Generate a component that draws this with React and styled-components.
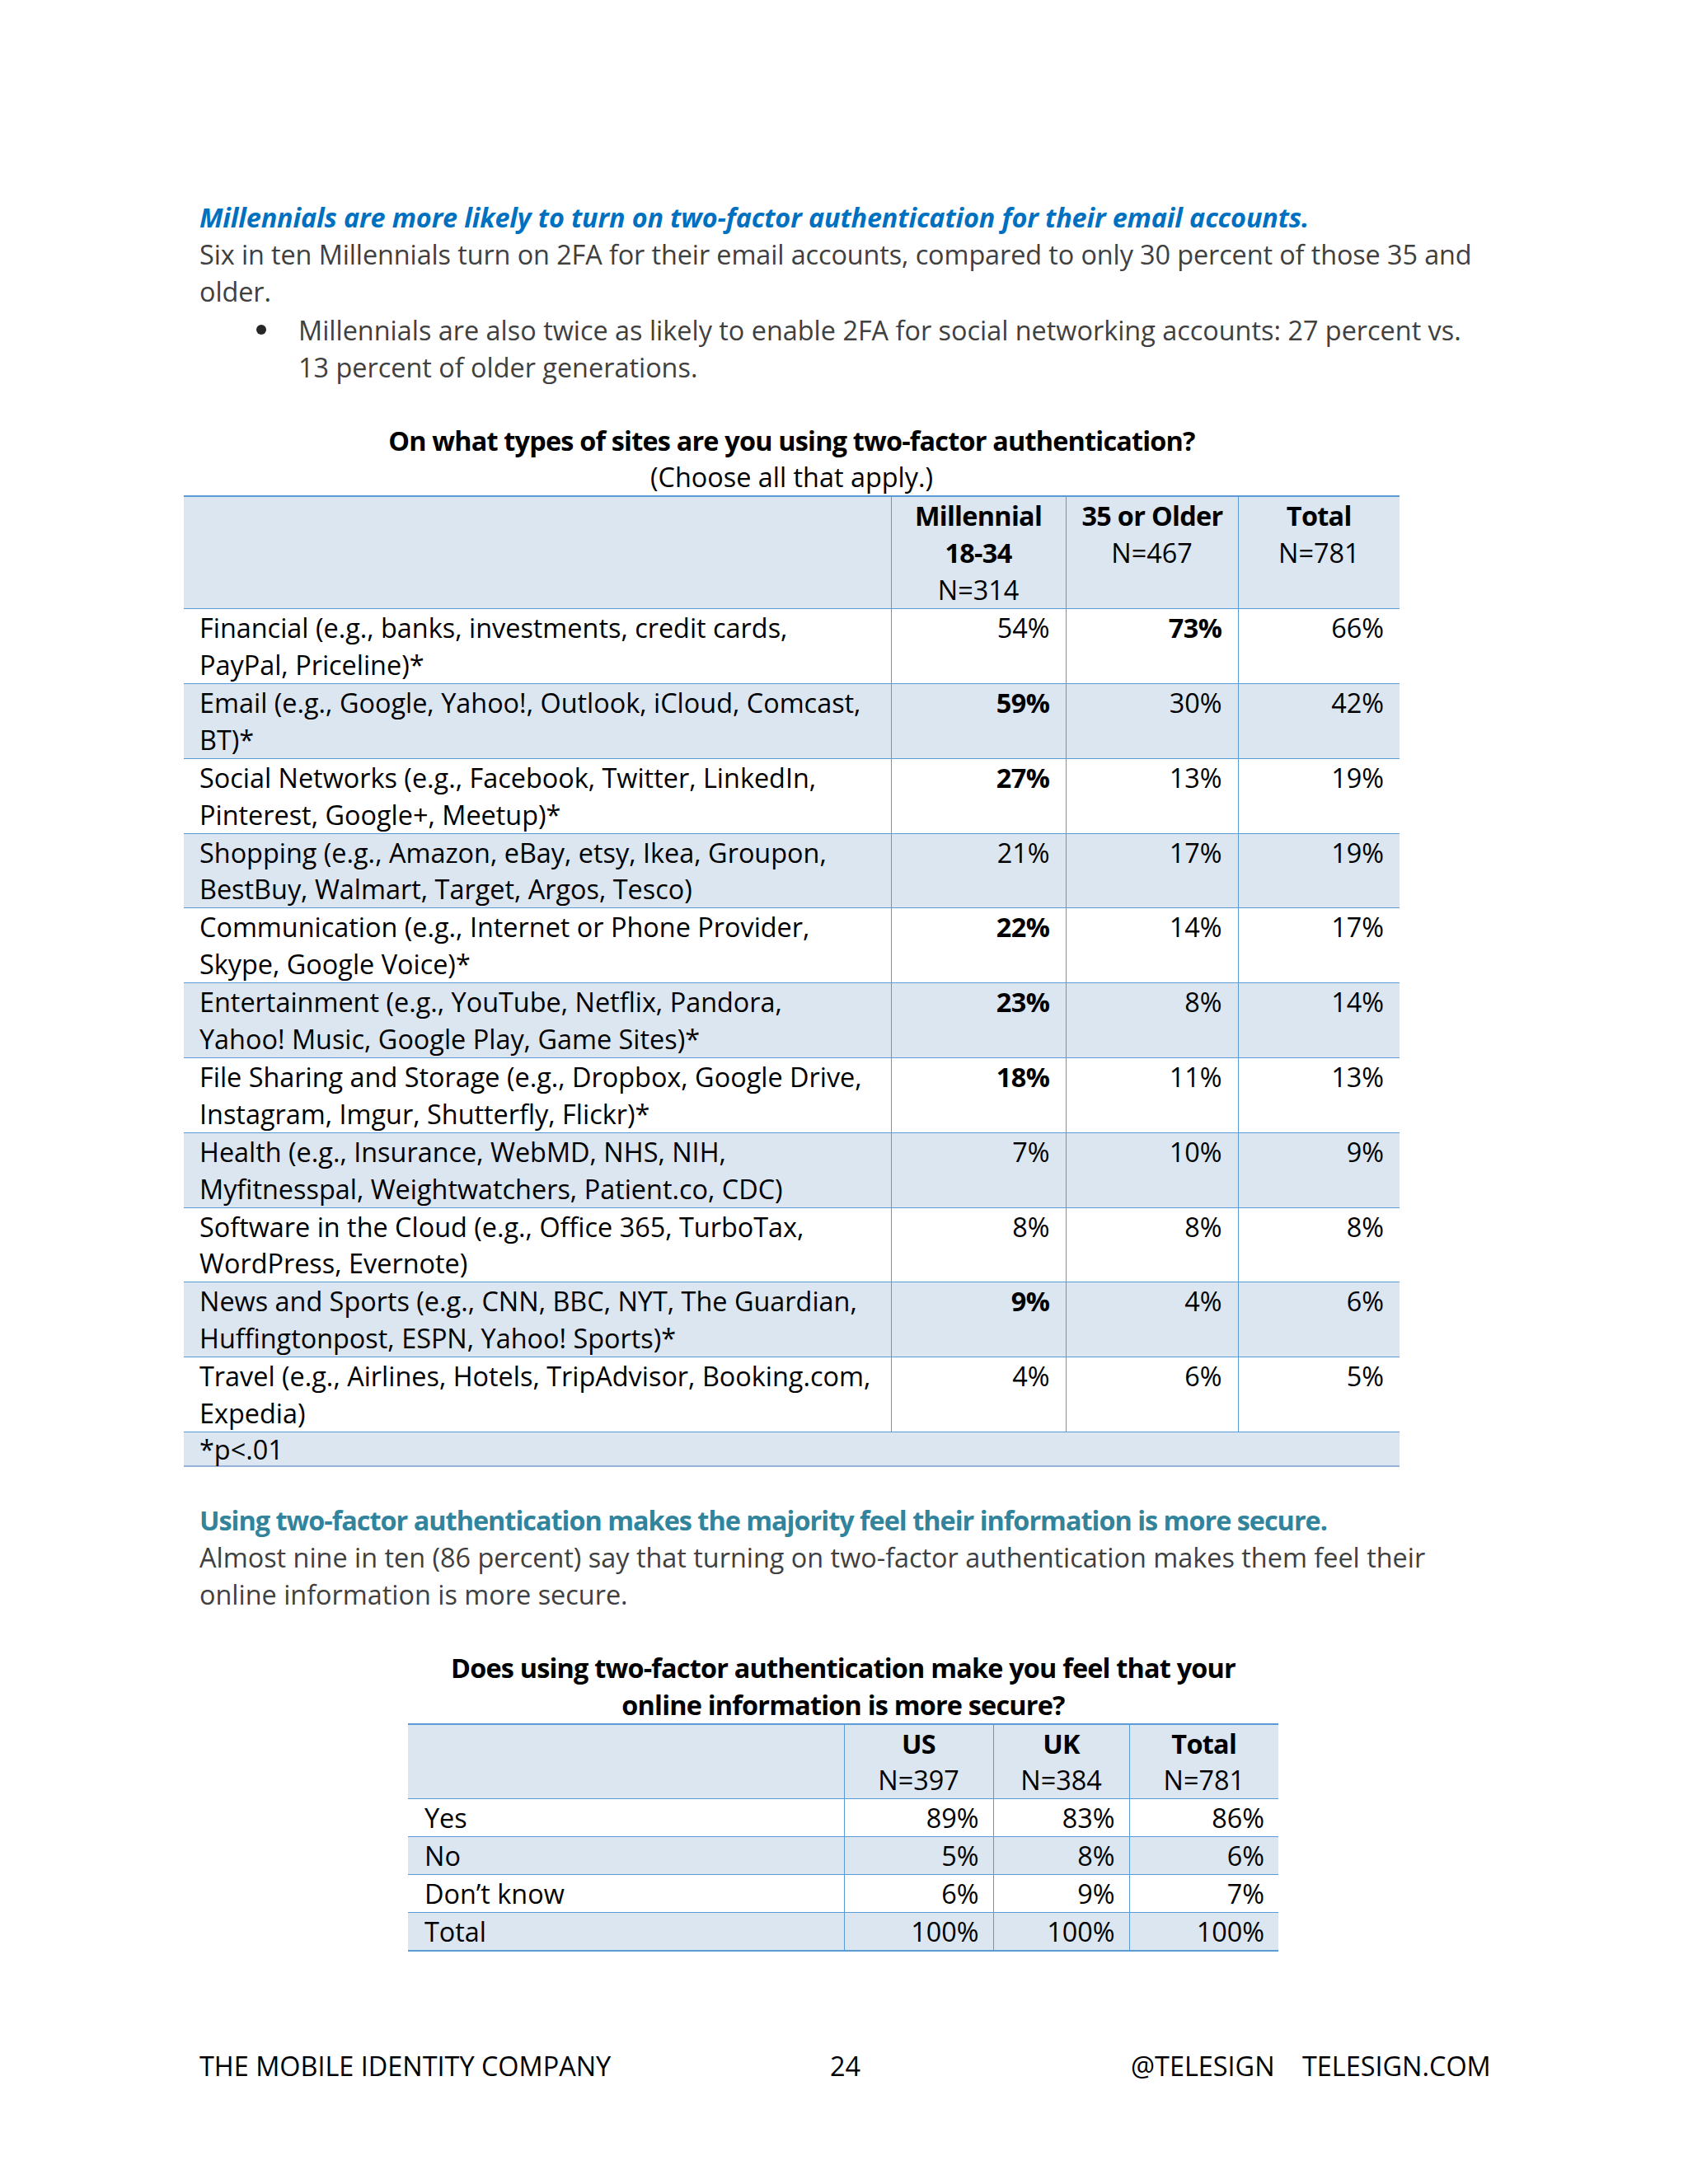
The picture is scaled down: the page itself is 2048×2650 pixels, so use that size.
import React from "react";
import styled, { createGlobalStyle } from "styled-components";

const GlobalStyle = createGlobalStyle`
  body {
    margin: 0;
    background: #fff;
    font-family: "Open Sans", "Liberation Sans", sans-serif;
  }
`;

const BLUE_LINE = "#5b9bd5";
const SHADE = "#dce6f1";
const LINE = "44.9px";

const Page = styled.div`
  width: 2048px;
  height: 2650px;
  box-sizing: border-box;
  padding: 241px 242px 121px 242px;
  display: flex;
  flex-direction: column;
  font-size: 32.4px;
  line-height: ${LINE};
  color: #404040;
`;

const Lead = styled.h2`
  margin: ${(p) => p.$gap || 0}px 0 0;
  font-size: 32.4px;
  line-height: ${LINE};
  font-weight: 700;
  font-style: ${(p) => (p.$italic ? "italic" : "normal")};
  letter-spacing: ${(p) => (p.$italic ? "-0.15px" : "-1px")};
  color: ${(p) => p.$color};
  white-space: nowrap;
`;

const Para = styled.p`
  margin: 0;
  white-space: nowrap;
  letter-spacing: ${(p) => p.$tight || 0}px;
`;

const Bullets = styled.ul`
  list-style: none;
  margin: 2px 0 0;
  padding: 0 0 0 69px;
`;

const BulletItem = styled.li`
  display: grid;
  grid-template-columns: 51px 1fr;
  white-space: nowrap;
`;

const DotCell = styled.span`
  height: ${LINE};
  display: flex;
  align-items: center;
`;

const Dot = styled.span`
  width: 12px;
  height: 12px;
  border-radius: 50%;
  background: #262626;
`;

const TableBlock = styled.section`
  margin: ${(p) => p.$gap}px 0 0 ${(p) => p.$offset}px;
  width: ${(p) => p.$width}px;
`;

const Caption = styled.div`
  text-align: center;
  color: #000;
  white-space: nowrap;
`;

const CaptionLine = styled.div`
  font-weight: ${(p) => (p.$bold ? 700 : 400)};
  letter-spacing: ${(p) => (p.$bold ? "-0.8px" : "0")};
`;

const Grid = styled.table`
  border-collapse: collapse;
  table-layout: fixed;
  width: 100%;
  color: #000;
  font-size: 32.4px;
  line-height: ${LINE};
`;

const Row = styled.tr`
  background: ${(p) => (p.$shaded ? SHADE : "#fff")};
`;

const Cell = styled.td`
  padding: 0 ${(p) => p.$pad || 19}px 0 ${(p) => p.$padLeft || p.$pad || 19}px;
  vertical-align: top;
  white-space: nowrap;
  text-align: ${(p) => p.$align || "left"};
  font-weight: ${(p) => (p.$bold ? 700 : 400)};
  letter-spacing: ${(p) => (p.$bold ? "-0.5px" : "0")};
  border-top: ${(p) => (p.$top ? 2 : 1)}px solid ${BLUE_LINE};
  border-left: ${(p) => (p.$first ? "none" : `1px solid ${BLUE_LINE}`)};
  border-bottom: ${(p) => (p.$bottom ? `2px solid ${p.$bottom}` : "none")};
  height: ${(p) => (p.$height ? `${p.$height}px` : "auto")};
  line-height: ${(p) => (p.$height ? `${p.$height}px` : LINE)};
`;

const HeadLine = styled.div`
  font-weight: ${(p) => (p.$bold ? 700 : 400)};
  letter-spacing: ${(p) => (p.$bold ? "-0.7px" : "0")};
`;

const Footer = styled.footer`
  margin-top: auto;
  display: grid;
  grid-template-columns: 765px 365px 208px auto;
  color: #000;
  white-space: nowrap;
`;

const sitesHeader = [
  { bold: ["Millennial", "18-34"], n: "N=314" },
  { bold: ["35 or Older"], n: "N=467" },
  { bold: ["Total"], n: "N=781" },
];

const sites = [
  [["Financial (e.g., banks, investments, credit cards,", "PayPal, Priceline)*"], ["54%", "73%", "66%"], 1],
  [["Email (e.g., Google, Yahoo!, Outlook, iCloud, Comcast,", "BT)*"], ["59%", "30%", "42%"], 0],
  [["Social Networks (e.g., Facebook, Twitter, LinkedIn,", "Pinterest, Google+, Meetup)*"], ["27%", "13%", "19%"], 0],
  [["Shopping (e.g., Amazon, eBay, etsy, Ikea, Groupon,", "BestBuy, Walmart, Target, Argos, Tesco)"], ["21%", "17%", "19%"], -1],
  [["Communication (e.g., Internet or Phone Provider,", "Skype, Google Voice)*"], ["22%", "14%", "17%"], 0],
  [["Entertainment (e.g., YouTube, Netflix, Pandora,", "Yahoo! Music, Google Play, Game Sites)*"], ["23%", "8%", "14%"], 0],
  [["File Sharing and Storage (e.g., Dropbox, Google Drive,", "Instagram, Imgur, Shutterfly, Flickr)*"], ["18%", "11%", "13%"], 0],
  [["Health (e.g., Insurance, WebMD, NHS, NIH,", "Myfitnesspal, Weightwatchers, Patient.co, CDC)"], ["7%", "10%", "9%"], -1],
  [["Software in the Cloud (e.g., Office 365, TurboTax,", "WordPress, Evernote)"], ["8%", "8%", "8%"], -1],
  [["News and Sports (e.g., CNN, BBC, NYT, The Guardian,", "Huffingtonpost, ESPN, Yahoo! Sports)*"], ["9%", "4%", "6%"], 0],
  [["Travel (e.g., Airlines, Hotels, TripAdvisor, Booking.com,", "Expedia)"], ["4%", "6%", "5%"], -1],
];

const secureHeader = [
  { bold: ["US"], n: "N=397" },
  { bold: ["UK"], n: "N=384" },
  { bold: ["Total"], n: "N=781" },
];

const secure = [
  ["Yes", "89%", "83%", "86%"],
  ["No", "5%", "8%", "6%"],
  ["Don’t know", "6%", "9%", "7%"],
  ["Total", "100%", "100%", "100%"],
];

function HeaderRow({ cols }) {
  return (
    <Row $shaded>
      <Cell $first $top />
      {cols.map((c) => (
        <Cell key={c.n} $top $align="center">
          {c.bold.map((b) => (
            <HeadLine key={b} $bold>
              {b}
            </HeadLine>
          ))}
          <HeadLine>{c.n}</HeadLine>
        </Cell>
      ))}
    </Row>
  );
}

function SitesTable() {
  return (
    <TableBlock $gap={44} $offset={-19} $width={1475}>
      <Caption>
        <CaptionLine $bold>On what types of sites are you using two-factor authentication?</CaptionLine>
        <CaptionLine>(Choose all that apply.)</CaptionLine>
      </Caption>
      <Grid>
        <colgroup>
          <col style={{ width: 858 }} />
          <col style={{ width: 212 }} />
          <col style={{ width: 209 }} />
          <col style={{ width: 196 }} />
        </colgroup>
        <tbody>
          <HeaderRow cols={sitesHeader} />
          {sites.map(([label, values, boldIdx], i) => (
            <Row key={label[0]} $shaded={i % 2 === 1}>
              <Cell $first>
                {label[0]}
                <br />
                {label[1]}
              </Cell>
              {values.map((v, j) => (
                <Cell key={j} $align="right" $bold={j === boldIdx}>
                  {v}
                </Cell>
              ))}
            </Row>
          ))}
          <Row $shaded>
            <Cell $first colSpan={4} $height={40} $bottom="#95b3d7">
              *p&lt;.01
            </Cell>
          </Row>
        </tbody>
      </Grid>
    </TableBlock>
  );
}

function SecureTable() {
  return (
    <TableBlock $gap={44} $offset={253} $width={1056}>
      <Caption>
        <CaptionLine $bold>Does using two-factor authentication make you feel that your</CaptionLine>
        <CaptionLine $bold>online information is more secure?</CaptionLine>
      </Caption>
      <Grid>
        <colgroup>
          <col style={{ width: 529 }} />
          <col style={{ width: 181 }} />
          <col style={{ width: 165 }} />
          <col style={{ width: 181 }} />
        </colgroup>
        <tbody>
          <HeaderRow cols={secureHeader} />
          {secure.map(([label, ...values], i) => (
            <Row key={label} $shaded={i % 2 === 1}>
              <Cell $first $padLeft={20} $bottom={i === secure.length - 1 ? BLUE_LINE : null}>
                {label}
              </Cell>
              {values.map((v, j) => (
                <Cell
                  key={j}
                  $align="right"
                  $pad={17}
                  $bottom={i === secure.length - 1 ? BLUE_LINE : null}
                >
                  {v}
                </Cell>
              ))}
            </Row>
          ))}
        </tbody>
      </Grid>
    </TableBlock>
  );
}

export default function App() {
  return (
    <>
      <GlobalStyle />
      <Page>
        <Lead $italic $color="#0070c0">
          Millennials are more likely to turn on two-factor authentication for their email accounts.
        </Lead>
        <Para $tight={-0.1}>
          Six in ten Millennials turn on 2FA for their email accounts, compared to only 30 percent of those 35 and
          <br />
          older.
        </Para>
        <Bullets>
          <BulletItem>
            <DotCell>
              <Dot />
            </DotCell>
            <span>
              Millennials are also twice as likely to enable 2FA for social networking accounts: 27 percent vs.
              <br />
              13 percent of older generations.
            </span>
          </BulletItem>
        </Bullets>

        <SitesTable />

        <Lead $gap={42} $color="#31849b">
          Using two-factor authentication makes the majority feel their information is more secure.
        </Lead>
        <Para>
          Almost nine in ten (86 percent) say that turning on two-factor authentication makes them feel their
          <br />
          online information is more secure.
        </Para>

        <SecureTable />

        <Footer>
          <span>THE MOBILE IDENTITY COMPANY</span>
          <span>24</span>
          <span>@TELESIGN</span>
          <span>TELESIGN.COM</span>
        </Footer>
      </Page>
    </>
  );
}
